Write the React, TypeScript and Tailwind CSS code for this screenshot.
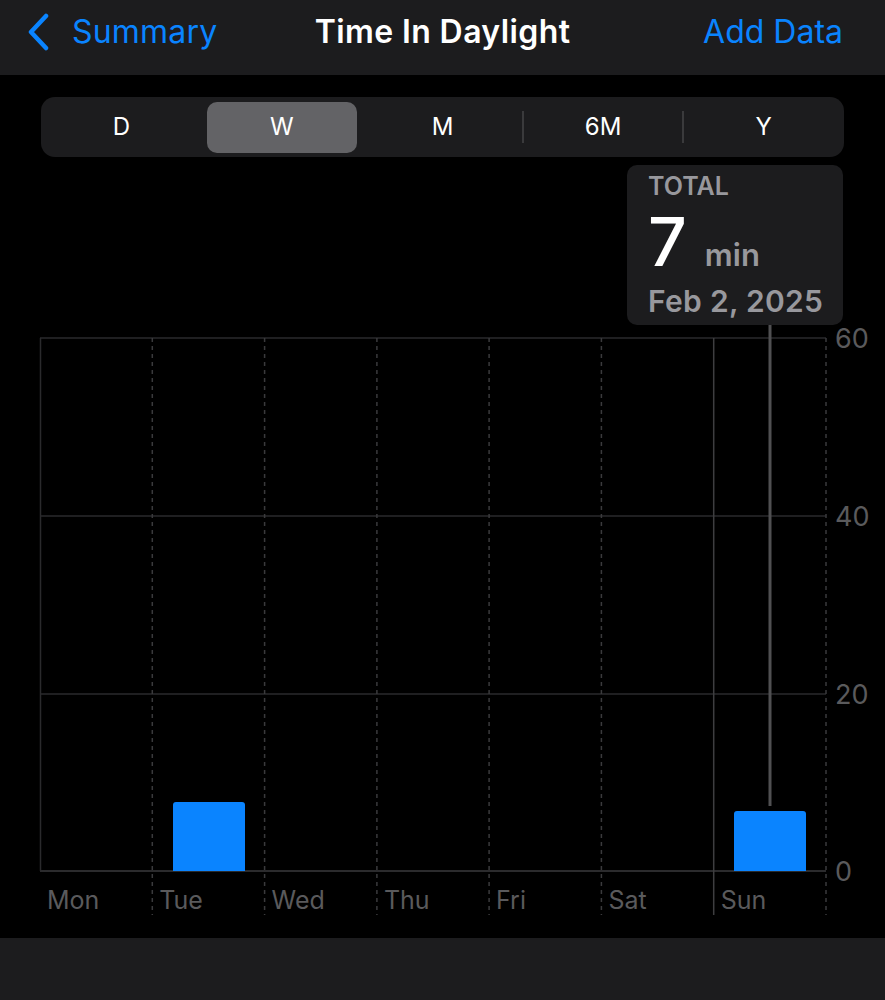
import React from "react";

const FONT = { fontFamily: "Inter, 'Open Sans', 'Liberation Sans', sans-serif" };

function Chart() {
  const O = 10;
  const cols = [40, 152.3, 264.6, 376.9, 489.1, 601.4, 713.7, 826];
  const days = ["Mon", "Tue", "Wed", "Thu", "Fri", "Sat", "Sun"];
  const rows = [
    { y: 13 + O, label: "60" },
    { y: 191 + O, label: "40" },
    { y: 369 + O, label: "20" },
    { y: 546 + O, label: "0" },
  ];
  const base = 546 + O;
  return (
    <svg width="885" height="623" viewBox="0 0 885 623" className="block -mt-[10px] relative" overflow="visible">
      {rows.map((r) => (
        <line key={r.y} x1={40} x2={826} y1={r.y} y2={r.y} stroke={r.y === base ? "#3a3a3c" : "#2a2a2c"} strokeWidth={1.5} />
      ))}
      <line x1={40.5} x2={40.5} y1={13 + O} y2={base} stroke="#2a2a2c" strokeWidth={1.5} />
      {cols.slice(1).map((x, i) =>
        i === 5 ? (
          <line key={x} x1={x} x2={x} y1={13 + O} y2={590 + O} stroke="#3e3e40" strokeWidth={1.5} />
        ) : (
          <line key={x} x1={x} x2={x} y1={13 + O} y2={590 + O} stroke="#3a3a3c" strokeWidth={1.5} strokeDasharray="4 4" />
        )
      )}
      <path d={`M173 ${base} V${480 + O} a3 3 0 0 1 3 -3 H242 a3 3 0 0 1 3 3 V${base} Z`} fill="#0a84ff" />
      <path d={`M734 ${base} V${489 + O} a3 3 0 0 1 3 -3 H803 a3 3 0 0 1 3 3 V${base} Z`} fill="#0a84ff" />
      <line x1={770} x2={770} y1={O} y2={481 + O} stroke="#505052" strokeWidth={3} />
      {rows.map((r) => (
        <text key={r.label} x={835} y={r.y + 10} fill="#5a5a5c" fontSize={27} style={FONT}>
          {r.label}
        </text>
      ))}
      {days.map((d, i) => (
        <text key={d} x={cols[i] + 7} y={584 + O} fill="#5a5a5c" fontSize={25} style={FONT}>
          {d}
        </text>
      ))}
    </svg>
  );
}

export default function App() {
  const segs = ["D", "W", "M", "6M", "Y"];
  return (
    <div className="w-[885px] h-[1000px] bg-black flex flex-col overflow-hidden" style={FONT}>
      <div className="h-[75px] bg-[#1c1c1e] flex items-center justify-between pl-[26px] pr-[42px] pb-[12px] relative shrink-0">
        <div className="flex items-center gap-[20px] text-[#0a84ff] text-[32px]">
          <svg width="26" height="38" viewBox="0 0 26 38">
            <polyline points="20,3 5,19 20,35" fill="none" stroke="#0a84ff" strokeWidth="4.5" strokeLinecap="round" strokeLinejoin="round" />
          </svg>
          <span className="leading-none tracking-[0.2px]">Summary</span>
        </div>
        <div className="absolute left-0 right-0 top-0 h-[63px] flex items-center justify-center text-white text-[32px] font-semibold pointer-events-none leading-none tracking-[0.4px]">
          Time In Daylight
        </div>
        <div className="text-[#0a84ff] text-[32px] leading-none">Add Data</div>
      </div>

      <div className="flex-1 flex flex-col">
        <div className="mt-[22px] mx-[41px] h-[60px] rounded-[14px] bg-[#1c1c1e] flex items-center">
          {segs.map((s, i) => (
            <div key={s} className="flex-1 h-full relative flex items-center px-[5px]">
              {i === 3 || i === 4 ? (
                <div className="absolute left-[-1px] top-[14px] w-[2px] h-[32px] bg-[#3a3a3c]" />
              ) : null}
              <div
                className={
                  "w-full h-[51px] rounded-[10px] flex items-center justify-center text-white text-[24px] " +
                  (s === "W" ? "bg-[#636366]" : "")
                }
              >
                {s}
              </div>
            </div>
          ))}
        </div>

        <div className="mt-[8px] flex justify-end pr-[42px]">
          <div className="w-[216px] h-[160px] rounded-[10px] bg-[#1c1c1e] pl-[21px] pt-[6px] flex flex-col">
            <div className="text-[#98989d] text-[25px] font-semibold leading-[30px]">TOTAL</div>
            <div className="flex items-baseline mt-[4px] leading-none">
              <span className="text-white text-[68px] font-medium leading-[72px]">7</span>
              <span className="text-[#98989d] text-[31px] font-semibold ml-[18px]">min</span>
            </div>
            <div className="text-[#98989d] text-[30px] font-semibold leading-[36px] mt-[6px] tracking-[0.3px]">Feb 2, 2025</div>
          </div>
        </div>

        <Chart />
        <div className="flex-1" />
      </div>
      <div className="h-[62px] bg-[#1c1c1e] shrink-0" />
    </div>
  );
}
